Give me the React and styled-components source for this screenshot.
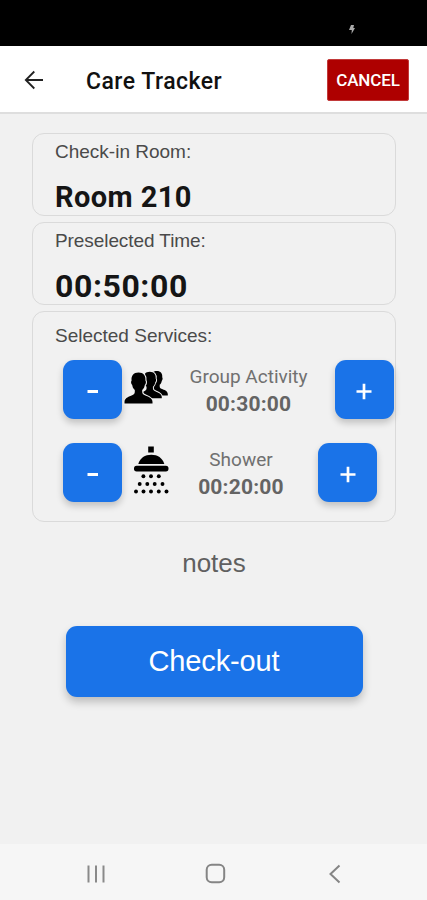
import React from "react";
import styled, { createGlobalStyle } from "styled-components";

const Global = createGlobalStyle`
  *, *::before, *::after { box-sizing: border-box; }
  body { margin: 0; background: #f1f1f1; }
  button { border: 0; padding: 0; margin: 0; cursor: pointer; }
  svg { display: block; flex: none; overflow: visible; }
`;

const arial = `"Liberation Sans", Arial, sans-serif`;
const roboto = `Roboto, "Noto Sans", sans-serif`;

const Screen = styled.div`
  width: 427px;
  height: 900px;
  display: flex;
  flex-direction: column;
  background: #f1f1f1;
  overflow: hidden;
`;

const StatusBar = styled.div`
  height: 46px;
  flex: none;
  display: flex;
  justify-content: flex-end;
  padding: 25px 72px 0 0;
  background: #000;
`;

const Header = styled.header`
  height: 68px;
  flex: none;
  display: flex;
  align-items: center;
  padding: 2px 18px 0 23px;
  background: #fff;
  border-bottom: 2px solid #dedede;
`;

const BackButton = styled.button`
  width: 22px;
  height: 22px;
  background: none;
`;

const Title = styled.h1`
  margin: 0 auto 0 41px;
  padding-top: 3px;
  font: 500 23px/30px ${roboto};
  letter-spacing: 0.48px;
  color: #111;
`;

const CancelButton = styled.button`
  width: 82px;
  height: 42px;
  border: 1px solid #c23a3a;
  border-radius: 2px;
  background: #ae0000;
  color: #fff;
  font: 500 17px/40px ${roboto};
  letter-spacing: -0.1px;
`;

const Content = styled.main`
  flex: 1;
  display: flex;
  flex-direction: column;
  padding: 19px 31px 0 32px;
`;

const Card = styled.section`
  height: ${(p) => p.$height}px;
  margin-bottom: 6px;
  padding: ${(p) => p.$top}px 0 0 22px;
  border: 1px solid #dadada;
  border-radius: 12px;
`;

const Label = styled.div`
  font: 400 19px/24px ${arial};
  letter-spacing: ${(p) => p.$spacing || 0}px;
  color: #4a4a4a;
`;

const Value = styled.div`
  margin-top: ${(p) => p.$gap}px;
  font: 700 ${(p) => p.$size}px/36px ${roboto};
  letter-spacing: ${(p) => p.$spacing || 0}px;
  color: #151515;
`;

const ServiceRow = styled.div`
  height: 59px;
  margin: ${(p) => p.$gap}px 0 0 8px;
  display: flex;
`;

const StepButton = styled.button`
  width: 59px;
  height: 59px;
  flex: none;
  display: flex;
  align-items: center;
  justify-content: center;
  border-radius: 11px;
  background: #1a73e8;
  box-shadow: 0 4px 7px rgba(0, 0, 0, 0.2);
`;

const IconSlot = styled.div`
  width: 47px;
  flex: none;
  padding: ${(p) => p.$pad};
`;

const ServiceInfo = styled.div`
  width: ${(p) => p.$width}px;
  flex: none;
  padding-top: 4px;
  text-align: center;
`;

const ServiceName = styled.div`
  font: 400 19px/26px ${roboto};
  color: #707070;
`;

const ServiceTime = styled.div`
  margin-top: 1px;
  font: 700 21px/26px ${roboto};
  letter-spacing: 0.2px;
  color: #646464;
`;

const Spacer = styled.div`
  width: ${(p) => p.$width}px;
  flex: none;
`;

const Notes = styled.div`
  margin-top: 18px;
  text-align: center;
  font: 400 26px/34px ${arial};
  color: #606060;
`;

const CheckoutButton = styled.button`
  width: 297px;
  height: 71px;
  margin: 46px auto 0 33.5px;
  border-radius: 11px;
  background: #1a73e8;
  box-shadow: 0 5px 8px rgba(0, 0, 0, 0.22);
  color: #fff;
  font: 400 29px/71px ${arial};
  letter-spacing: -0.15px;
`;

const NavBar = styled.nav`
  height: 56px;
  flex: none;
  display: flex;
  align-items: center;
  gap: 98px;
  padding: 3px 0 0 85px;
  background: #f6f6f6;
`;

function BoltIcon() {
  return (
    <svg width="6" height="9" viewBox="0 0 6 9" fill="#aaa">
      <path d="M2 0H5L4.3 3H6L2.5 9L2.8 5H0Z" />
    </svg>
  );
}

function BackArrow() {
  return (
    <svg width="22" height="22" viewBox="0 0 22 22" fill="none" stroke="#222" strokeWidth="1.8">
      <path d="M20 11H3M11.3 2.5L2.8 11L11.3 19.5" />
    </svg>
  );
}

function Minus() {
  return (
    <svg width="16" height="16" viewBox="0 0 16 16" stroke="#fff" strokeWidth="3">
      <path d="M2.5 9.5H13" />
    </svg>
  );
}

function Plus() {
  return (
    <svg width="16" height="16" viewBox="0 0 16 16" stroke="#fff" strokeWidth="2.7">
      <path d="M0.5 9.5H15.5M8 1.7V17.3" />
    </svg>
  );
}

const person =
  "M0 31V29.5C0 26 3 24.6 6.500 23.200C9 22.200 10.300 21.300 10.300 19.500V17.500C8.600 16 8 14.400 7.700 12.500C6.500 11.700 6.200 9 7.100 8C6.500 3.300 9 0 14 0S21.500 3.300 20.900 8C21.800 9 21.500 11.700 20.300 12.500C20 14.400 19.400 16 17.700 17.500V19.500C17.700 21.300 19 22.200 21.500 23.200C25 24.600 28 26 28 29.500V31Z";

const people = [
  "translate(21.7 0) scale(.79)",
  "translate(13.7 0.7) scale(.86)",
  "translate(0.5 1.5)",
];

function GroupIcon() {
  return (
    <svg width="44" height="34" viewBox="0 0 44 34" fill="#000" stroke="#f1f1f1" strokeWidth="2.2" paintOrder="stroke">
      {people.map((t) => <path key={t} d={person} transform={t} />)}
    </svg>
  );
}

const drops = [
  [30.3, [9.4, 17, 24.8]],
  [38, [5.7, 13.3, 20.7, 28.5]],
  [45.5, [2, 9.5, 17, 24.8, 32.5]],
];

function ShowerIcon() {
  return (
    <svg width="35" height="49" viewBox="0 0 35 49" fill="#000">
      <rect x="14.2" y="0.5" width="5.6" height="6" />
      <path d="M4.3 18C6 12 11 8.8 17.3 8.8S28.5 12 30.3 18Z" />
      <rect x="0" y="19.8" width="34.5" height="5.6" rx="2.6" />
      {drops.map(([y, xs]) => xs.map((x) => <circle key={`${x}-${y}`} cx={x} cy={y} r="1.95" />))}
    </svg>
  );
}

const services = [
  { name: "Group Activity", time: "00:30:00", icon: GroupIcon, pad: "11px 0 0 2px", gap: 12, width: 159, end: 6.5 },
  { name: "Shower", time: "00:20:00", icon: ShowerIcon, pad: "3px 0 0 12px", gap: 24, width: 144, end: 5 },
];

function Service({ name, time, icon: Icon, pad, gap, width, end }) {
  return (
    <ServiceRow $gap={gap}>
      <StepButton aria-label={`Remove ${name}`}><Minus /></StepButton>
      <IconSlot $pad={pad}><Icon /></IconSlot>
      <ServiceInfo $width={width}>
        <ServiceName>{name}</ServiceName>
        <ServiceTime>{time}</ServiceTime>
      </ServiceInfo>
      <Spacer $width={end} />
      <StepButton aria-label={`Add ${name}`}><Plus /></StepButton>
    </ServiceRow>
  );
}

export default function App() {
  return (
    <Screen>
      <Global />
      <StatusBar><BoltIcon /></StatusBar>
      <Header>
        <BackButton aria-label="Back"><BackArrow /></BackButton>
        <Title>Care Tracker</Title>
        <CancelButton>CANCEL</CancelButton>
      </Header>
      <Content>
        <Card $height={83} $top={6}>
          <Label>Check-in Room:</Label>
          <Value $size={29} $gap={15} $spacing={0.4}>Room 210</Value>
        </Card>
        <Card $height={83} $top={6}>
          <Label $spacing={-0.08}>Preselected Time:</Label>
          <Value $size={32} $gap={15} $spacing={0.58}>00:50:00</Value>
        </Card>
        <Card $height={211} $top={12}>
          <Label>Selected Services:</Label>
          {services.map((s) => <Service key={s.name} {...s} />)}
        </Card>
        <Notes>notes</Notes>
        <CheckoutButton>Check-out</CheckoutButton>
      </Content>
      <NavBar>
        <svg width="22" height="22" viewBox="0 0 22 22" stroke="#8a8a8a" strokeWidth="2">
          <path d="M3.5 2.5V19.500M11 2.5V19.500M18.500 2.5V19.500" />
        </svg>
        <svg width="22" height="22" viewBox="0 0 22 22" fill="none" stroke="#858585" strokeWidth="2">
          <rect x="1.7" y="1.7" width="17.5" height="17.5" rx="5" />
        </svg>
        <svg width="22" height="22" viewBox="0 0 22 22" fill="none" stroke="#858585" strokeWidth="2">
          <path d="M14.5 2.5L5.5 11L14.5 19.5" />
        </svg>
      </NavBar>
    </Screen>
  );
}
